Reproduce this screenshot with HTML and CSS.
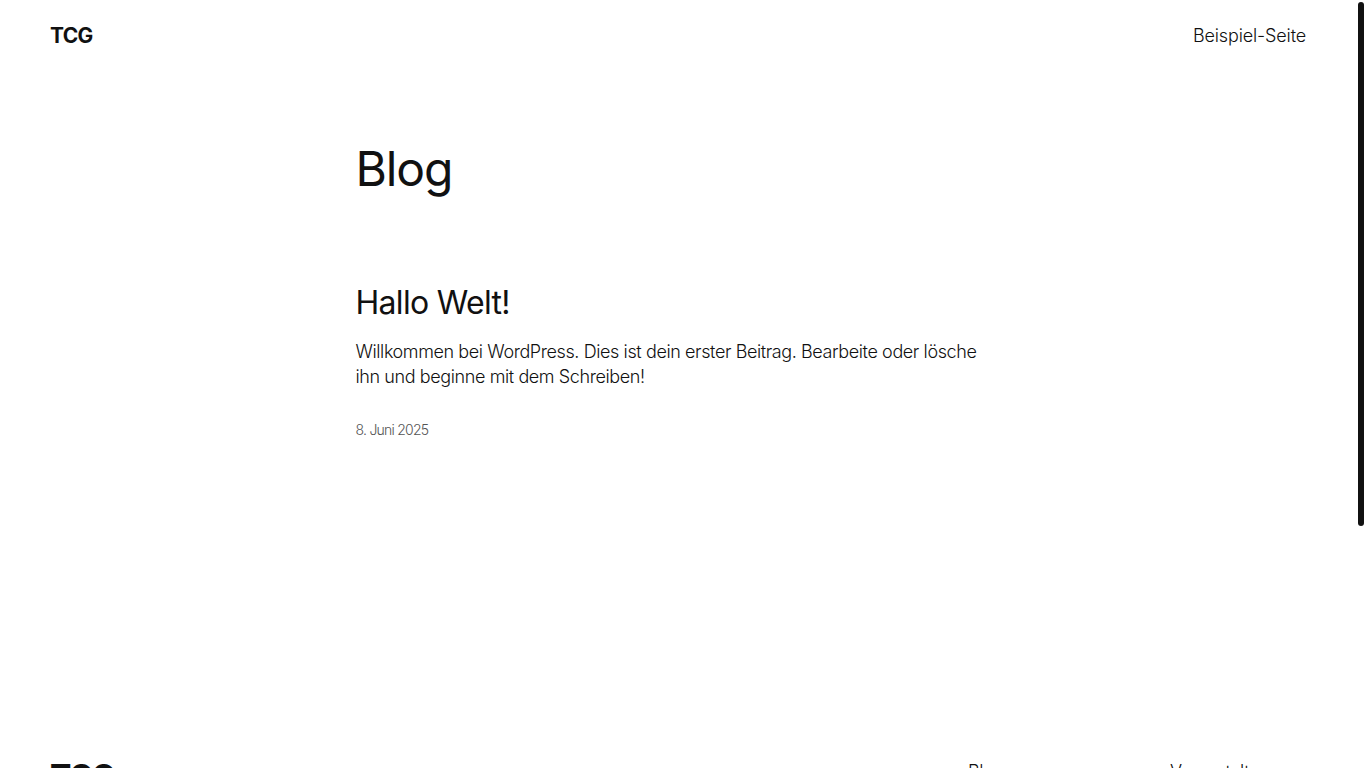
FILE: index.html
```html
<!DOCTYPE html>
<html lang="de">
<head>
<meta charset="utf-8">
<title>Blog – TCG</title>
<link rel="stylesheet" href="styles.css">
</head>
<body>
<div class="scroll-thumb" aria-hidden="true"></div>
<header class="site-header">
  <a class="site-title" href="#">TCG</a>
  <nav class="header-nav"><a href="#">Beispiel-Seite</a></nav>
</header>
<main class="site-main">
  <h1 class="page-title">Blog</h1>
  <article class="post">
    <h2 class="post-title"><a href="#">Hallo Welt!</a></h2>
    <p class="post-excerpt">Willkommen bei WordPress. Dies ist dein erster Beitrag. Bearbeite oder lösche ihn und beginne mit dem Schreiben!</p>
    <time class="post-date">8. Juni 2025</time>
  </article>
</main>
<footer class="site-footer">
  <div class="footer-top">
    <a class="footer-title" href="#">TCG</a>
    <div class="footer-nav">
      <ul class="footer-col">
        <li><a href="#">Blog</a></li>
        <li><a href="#">Über uns</a></li>
        <li><a href="#">FAQ</a></li>
      </ul>
      <ul class="footer-col">
        <li><a href="#">Veranstaltungen</a></li>
        <li><a href="#">Kontakt</a></li>
        <li><a href="#">Impressum</a></li>
      </ul>
    </div>
  </div>
  <div class="footer-bottom">
    <span>TCG</span>
    <span>Gestaltet mit WordPress</span>
  </div>
</footer>
</body>
</html>
```
FILE: styles.css
```css
html {
  scrollbar-width: none;
}
body {
  margin: 0 10px 0 0;
  font-family: Inter, "Noto Sans", sans-serif;
  font-weight: 300;
  color: #111;
  background: #fff;
  -webkit-font-smoothing: antialiased;
}
.scroll-thumb {
  position: fixed;
  top: 2px;
  right: 2px;
  width: 6px;
  height: 524px;
  background: #111;
  border-radius: 3px;
}
a {
  color: inherit;
  text-decoration: none;
}
.site-header {
  display: flex;
  justify-content: space-between;
  align-items: center;
  height: 70px;
  padding: 0 50px;
}
.site-title {
  font-size: 21px;
  font-weight: 700;
  letter-spacing: -0.7px;
}
.header-nav a {
  font-size: 18px;
  letter-spacing: -0.15px;
}
.site-main {
  width: 645px;
  margin: 0 auto;
  padding: 70px 0 0;
}
.page-title {
  margin: 0;
  font-size: 48px;
  font-weight: 400;
  line-height: 57px;
  letter-spacing: -1.1px;
}
.post {
  margin-top: 87px;
}
.post-title {
  margin: 0;
  font-size: 32px;
  font-weight: 400;
  line-height: 38px;
  letter-spacing: -0.7px;
}
.post-excerpt {
  margin: 17px 0 0;
  font-size: 18px;
  line-height: 25px;
  letter-spacing: -0.4px;
}
.post-date {
  display: block;
  margin-top: 31px;
  font-size: 14px;
  line-height: 20px;
  color: #555;
  letter-spacing: -0.75px;
}
.site-footer {
  padding: 0 50px 60px;
}
.footer-top {
  display: flex;
  justify-content: space-between;
  align-items: flex-start;
  padding-top: 318px;
}
.footer-title {
  font-size: 32px;
  font-weight: 700;
  letter-spacing: -1.2px;
  line-height: 38px;
}
.footer-nav {
  display: grid;
  grid-template-columns: 202px 136px;
  padding-top: 1px;
}
.footer-col {
  list-style: none;
  margin: 0;
  padding: 0;
  display: flex;
  flex-direction: column;
  gap: 12px;
  font-size: 18px;
  line-height: 25px;
  letter-spacing: -0.4px;
  white-space: nowrap;
}
.footer-bottom {
  display: flex;
  justify-content: space-between;
  margin-top: 120px;
  font-size: 14px;
}
```
